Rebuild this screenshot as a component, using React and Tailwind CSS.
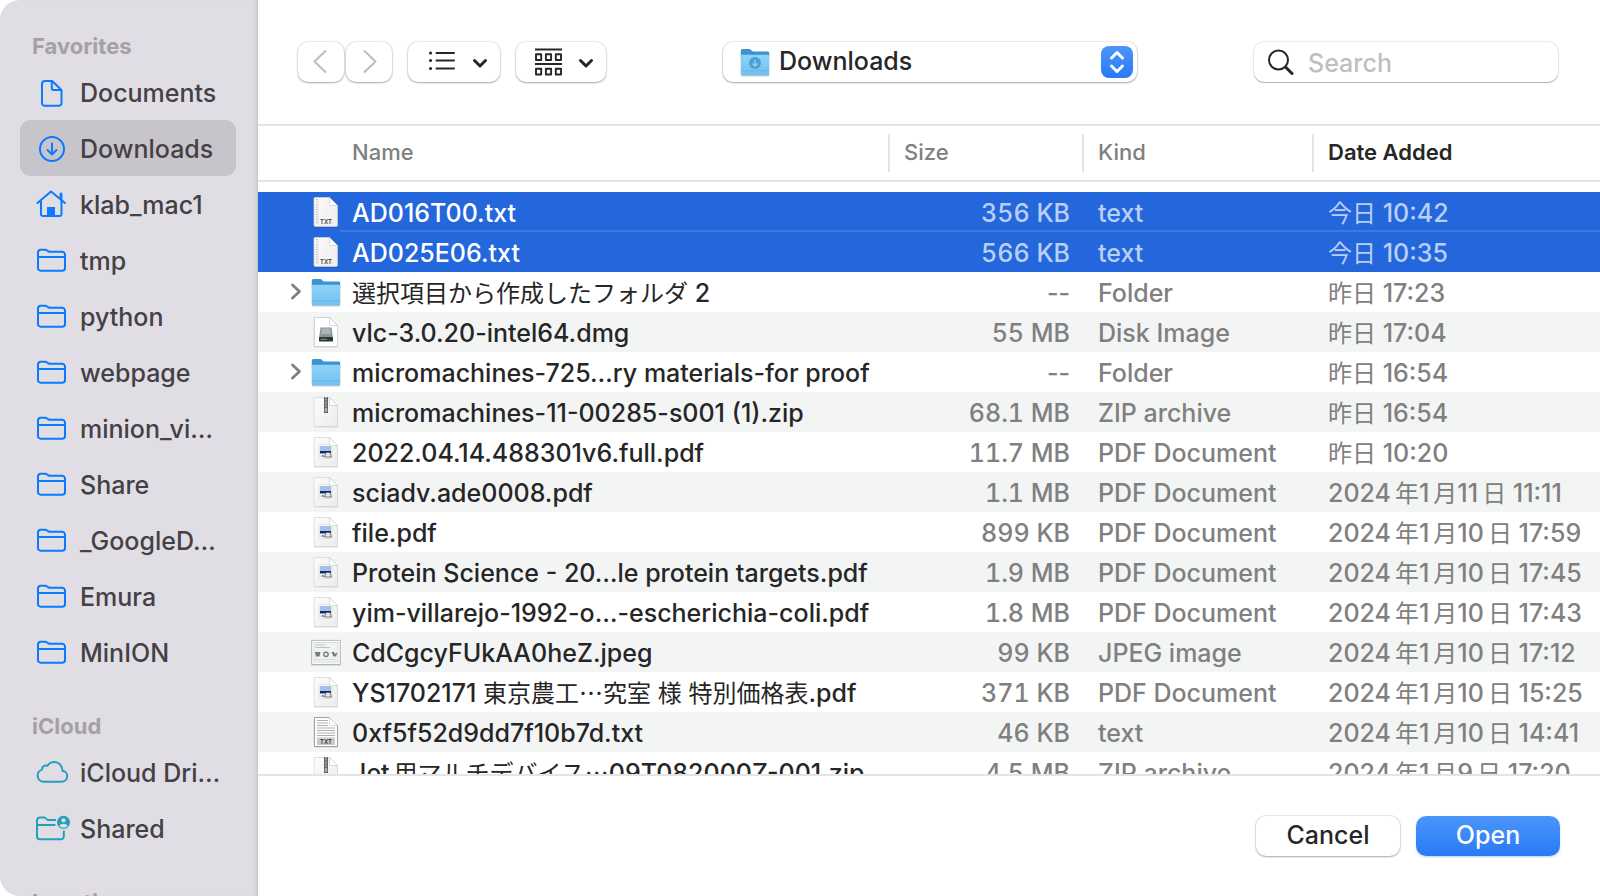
const CJK = /([\u2e80-\u9fff\uff00-\uffef\u22ef]+)/;

function Mixed({ text }) {
  const parts = text.split(CJK);
  return parts.map((part, i) => {
    if (i % 2 === 0) return part;
    const touchesLatin = /[0-9A-Za-z]$/.test(parts[i - 1]);
    return (
      <span key={i} className={`font-['Noto_Sans_CJK_JP',sans-serif] text-[24px] leading-none font-normal ${touchesLatin ? "ml-1" : ""}`}>
        {part}
      </span>
    );
  });
}

function FolderOutline() {
  return (
    <svg className="size-8" viewBox="0 0 32 32" fill="none" stroke="#0a7aff" strokeWidth="2" strokeLinejoin="round" aria-hidden="true">
      <path d="M2 24V8.500A2.800 2.800 0 0 1 4.800 5.800H9.500C11 5.800 11.800 7.800 13.500 7.800H26.200A2.800 2.800 0 0 1 29 10.600V24A2.700 2.700 0 0 1 26.300 26.700H4.700A2.700 2.700 0 0 1 2 24ZM2 13H29" />
    </svg>
  );
}

function DocumentOutline() {
  return (
    <svg className="size-8" viewBox="0 0 32 32" fill="none" stroke="#0a7aff" strokeWidth="2" strokeLinejoin="round" aria-hidden="true">
      <path d="M9 5H16.200L25.500 14V27A2.800 2.800 0 0 1 22.700 29.800H8.800A2.800 2.800 0 0 1 6 27V8A3 3 0 0 1 9 5Z" />
      <path d="M15.800 5V12.500A1.500 1.500 0 0 0 17.300 14H25.500" />
    </svg>
  );
}

function DownloadOutline() {
  return (
    <svg className="size-8" viewBox="0 0 32 32" fill="none" stroke="#0a7aff" strokeWidth="2" strokeLinecap="round" strokeLinejoin="round" aria-hidden="true">
      <circle cx="16" cy="17" r="12" />
      <path d="M16 11.500V22M11.500 18L16 22.500L20.500 18" />
    </svg>
  );
}

function HomeOutline() {
  return (
    <svg className="size-8" viewBox="0 0 32 32" fill="none" stroke="#0a7aff" strokeWidth="2" strokeLinecap="round" strokeLinejoin="round" aria-hidden="true">
      <path d="M1.500 15L15 3.500L29 15M5 13V26A1.800 1.800 0 0 0 6.800 28H23.700A1.800 1.800 0 0 0 25.500 26V13" />
      <path d="M25 11V6" strokeWidth="2.800" />
      <path d="M11 28V19H19V28Z" fill="#0a7aff" stroke="none" />
    </svg>
  );
}

function CloudOutline() {
  return (
    <svg className="h-8 w-9" viewBox="0 0 36 32" fill="none" stroke="#24a0bc" strokeWidth="2" strokeLinejoin="round" aria-hidden="true">
      <path d="M7.500 25.700A6.200 6.200 0 0 1 6 13.600C6 10.500 8.500 8.800 11.500 9.800C13 7.300 15.500 6 18.500 6C23 6 26.500 9.800 26.500 15C29.500 15 31.200 17.700 31.200 20C31.200 23.200 28.800 25.700 25.500 25.700Z" />
    </svg>
  );
}

function SharedOutline() {
  return (
    <svg className="h-8 w-9" viewBox="0 0 36 32" fill="none" stroke="#24a0bc" strokeWidth="2" strokeLinejoin="round" aria-hidden="true">
      <path d="M20 8H12C10.500 8 10 5.500 8.500 5.500H3.500A3 3 0 0 0 1 8V24.500A2.800 2.800 0 0 0 3.800 27.300H25A2.800 2.800 0 0 0 27.800 24.500V18.500M1 13H19.500" />
      <circle cx="27.500" cy="10.300" r="6.500" fill="#24a0bc" stroke="none" />
      <circle cx="27.500" cy="8.300" r="2.100" fill="#e1dde4" stroke="none" />
      <path d="M23.400 14.100C24.300 11.100 30.700 11.100 31.600 14.100C29.700 16.300 25.300 16.300 23.400 14.100Z" fill="#e1dde4" stroke="none" />
    </svg>
  );
}

function Page({ children }) {
  return (
    <svg className="h-9 w-7 shrink-0" viewBox="0 0 28 36" aria-hidden="true">
      <defs>
        <linearGradient id="paper" x1="0" y1="0" x2="1" y2="1">
          <stop offset="0" stopColor="#fcfcfc" />
          <stop offset="1" stopColor="#ececec" />
        </linearGradient>
      </defs>
      <path d="M2.500 4.500H17.500L26 12.500V32A1.500 1.500 0 0 1 24.500 33.500H3.500A1.500 1.500 0 0 1 2 32V5.500Z" fill="#00000022" />
      <path d="M2.500 3.500H17.500L25.500 11.500V31.200A1.300 1.300 0 0 1 24.200 32.500H3.200A1.300 1.300 0 0 1 2 31.200V4.500Z" fill="url(#paper)" stroke="#d4d4d4" strokeWidth="0.700" />
      {children}
      <path d="M17.500 3.500V10.500A1 1 0 0 0 18.500 11.500H25.500Z" fill="#fff" stroke="#c9c9c9" strokeWidth="0.700" />
    </svg>
  );
}

function TxtIcon() {
  return (
    <Page>
      <path d="M4.500 5V30" stroke="#a8a8a8" strokeWidth="1" strokeDasharray="1 1.500" />
      <path d="M6 5V30" stroke="#d2d2d2" strokeWidth="0.600" />
      <text x="14" y="29.500" textAnchor="middle" fontSize="6" fontWeight="600" fill="#444" className="font-['Inter',sans-serif]">TXT</text>
    </Page>
  );
}

function TxtPreviewIcon() {
  return (
    <Page>
      <path d="M2.500 3.500H17.500L25.500 11.500V32.500H2.500Z" fill="#fff" stroke="#8d8d8d" strokeWidth="0.800" />
      <path d="M5 6.500H16M5 9H16M5 11.500H16M5 14H23M5 16.500H23M5 19H23M5 21.500H23M5 24H23" stroke="#b0b0b0" strokeWidth="1.200" />
      <rect x="5" y="25" width="18" height="6" fill="#c9c9c9" />
      <text x="14" y="30" textAnchor="middle" fontSize="6" fontWeight="600" fill="#333" className="font-['Inter',sans-serif]">TXT</text>
    </Page>
  );
}

function PdfIcon() {
  return (
    <Page>
      <rect x="7.200" y="10.800" width="12" height="13.500" rx="1" fill="#fff" stroke="#ccc" strokeWidth="0.600" />
      <rect x="8" y="12" width="11" height="5.500" fill="#a0c0ee" />
      <rect x="8" y="17" width="11" height="2.500" fill="#16285c" />
      <path d="M8 20.500H19V23H8Z" fill="#dbe3ee" />
      <path d="M12.500 23L14 18.500H18L19.500 23Z" fill="#e4e8ec" stroke="#56616e" strokeWidth="0.800" />
      <path d="M10 23L11 21L12 23" fill="none" stroke="#56616e" strokeWidth="0.700" />
    </Page>
  );
}

function ZipIcon() {
  return (
    <Page>
      <rect x="12" y="3" width="4" height="16" fill="#5e646c" />
      <path d="M14 3V14" stroke="#c7ccd2" strokeWidth="1.600" strokeDasharray="1 1.200" />
      <rect x="12.800" y="14" width="2.400" height="4" rx="1" fill="#a9b0b8" />
    </Page>
  );
}

function DiskIcon() {
  return (
    <Page>
      <path d="M2.500 3.500H17.500L25.500 11.500V32.500H2.500Z" fill="#fff" stroke="#ccc" strokeWidth="0.800" />
      <path d="M8.500 13.500H19.500L21 24H7Z" fill="#8c9498" />
      <path d="M10 14.500H18L19 20H9Z" fill="#adb5b8" />
      <rect x="7" y="23" width="14" height="4.500" rx="0.800" fill="#2e3335" />
      <path d="M8.500 25.300H15" stroke="#79c08a" strokeWidth="0.800" />
    </Page>
  );
}

function JpegIcon() {
  return (
    <svg className="h-9 w-8 shrink-0" viewBox="0 0 32 36" aria-hidden="true">
      <rect x="1.500" y="7.500" width="29" height="24" fill="#00000035" />
      <rect x="1.800" y="6.300" width="28.400" height="24" fill="#fff" stroke="#a9a9a9" strokeWidth="0.800" />
      <rect x="4" y="8.500" width="24" height="19.500" fill="#f1f2f2" stroke="#c4c8c8" strokeWidth="0.600" />
      <path d="M5.500 11H15M5.500 13.500H20" stroke="#b6bfbd" strokeWidth="0.900" />
      <path d="M5 18H10.500L9.500 22.500H6ZM21.500 18H24L25 20L27.500 18L26 22.500H23.500Z" fill="#717d79" />
      <circle cx="16" cy="20.300" r="2.200" fill="none" stroke="#717d79" strokeWidth="1.400" />
      <path d="M5 25.500H26" stroke="#d5dad8" strokeWidth="0.900" />
    </svg>
  );
}

function FolderIcon({ download }) {
  return (
    <svg className="h-9 w-8 shrink-0" viewBox="0 0 32 36" aria-hidden="true">
      <defs>
        <linearGradient id="folder" x1="0" y1="0" x2="0" y2="1">
          <stop offset="0" stopColor="#8ed2f8" />
          <stop offset="1" stopColor="#74c0ee" />
        </linearGradient>
      </defs>
      <path d="M1.800 11V31A1.500 1.500 0 0 0 3.300 32.500H28.700A1.500 1.500 0 0 0 30.200 31V11Z" fill="#00000030" />
      <path d="M1.800 6.500A1.500 1.500 0 0 1 3.300 5H10.500C12 5 12.500 7.500 14.500 7.500H28.700A1.500 1.500 0 0 1 30.200 9V15H1.800Z" fill="#3f93cd" />
      <path d="M1.800 12.200A1.500 1.500 0 0 1 3.300 10.700H28.700A1.500 1.500 0 0 1 30.200 12.200V30A1.500 1.500 0 0 1 28.700 31.500H3.300A1.500 1.500 0 0 1 1.800 30Z" fill="url(#folder)" />
      <path d="M2 26.800H30" stroke="#5fb0e2" strokeWidth="0.800" />
      {download && (
        <>
          <circle cx="16" cy="19" r="6" fill="#4c9fd6" />
          <path d="M16 15.800V21.500M13.500 19.500L16 22L18.500 19.500" fill="none" stroke="#8ed2f8" strokeWidth="1.400" />
        </>
      )}
    </svg>
  );
}

const favorites = [
  ["Documents", DocumentOutline],
  ["Downloads", DownloadOutline],
  ["klab_mac1", HomeOutline],
  ["tmp", FolderOutline],
  ["python", FolderOutline],
  ["webpage", FolderOutline],
  ["minion_vi…", FolderOutline],
  ["Share", FolderOutline],
  ["_GoogleD…", FolderOutline],
  ["Emura", FolderOutline],
  ["MinION", FolderOutline],
];

const icloud = [
  ["iCloud Dri…", CloudOutline],
  ["Shared", SharedOutline],
];

const files = [
  ["AD016T00.txt", TxtIcon, "356 KB", "text", "今日 10:42"],
  ["AD025E06.txt", TxtIcon, "566 KB", "text", "今日 10:35"],
  ["選択項目から作成したフォルダ 2", FolderIcon, "--", "Folder", "昨日 17:23"],
  ["vlc-3.0.20-intel64.dmg", DiskIcon, "55 MB", "Disk Image", "昨日 17:04"],
  ["micromachines-725…ry materials-for proof", FolderIcon, "--", "Folder", "昨日 16:54"],
  ["micromachines-11-00285-s001 (1).zip", ZipIcon, "68.1 MB", "ZIP archive", "昨日 16:54"],
  ["2022.04.14.488301v6.full.pdf", PdfIcon, "11.7 MB", "PDF Document", "昨日 10:20"],
  ["sciadv.ade0008.pdf", PdfIcon, "1.1 MB", "PDF Document", "2024年1月11日 11:11"],
  ["file.pdf", PdfIcon, "899 KB", "PDF Document", "2024年1月10日 17:59"],
  ["Protein Science - 20…le protein targets.pdf", PdfIcon, "1.9 MB", "PDF Document", "2024年1月10日 17:45"],
  ["yim-villarejo-1992-o…-escherichia-coli.pdf", PdfIcon, "1.8 MB", "PDF Document", "2024年1月10日 17:43"],
  ["CdCgcyFUkAA0heZ.jpeg", JpegIcon, "99 KB", "JPEG image", "2024年1月10日 17:12"],
  ["YS1702171 東京農工⋯究室 様 特別価格表.pdf", PdfIcon, "371 KB", "PDF Document", "2024年1月10日 15:25"],
  ["0xf5f52d9dd7f10b7d.txt", TxtPreviewIcon, "46 KB", "text", "2024年1月10日 14:41"],
  ["Jet用マルチデバイス⋯09T082000Z-001.zip", ZipIcon, "4.5 MB", "ZIP archive", "2024年1月9日 17:20"],
];

function SidebarSection({ title, items, current }) {
  return (
    <section className="pt-7">
      <h2 className="flex h-9 items-center px-8 text-[22px] font-bold text-[#a3a0a6]">{title}</h2>
      <ul className="pr-[21px] pl-5">
        {items.map(([name, Icon]) => (
          <li key={name}>
            <a
              href="#"
              aria-current={name === current ? "page" : undefined}
              className="flex h-14 items-center rounded-[10px] pl-4 whitespace-nowrap aria-[current=page]:bg-[#c8c4cb]"
            >
              <span className="flex w-11 shrink-0">
                <Icon />
              </span>
              <span className="pt-[2px]">{name}</span>
            </a>
          </li>
        ))}
      </ul>
    </section>
  );
}

const raised = "rounded-[10px] bg-white shadow-[0_0_1px_1px_rgba(0,0,0,0.08),0_1px_2px_rgba(0,0,0,0.28)]";

function Toolbar() {
  return (
    <header className="flex h-[126px] shrink-0 items-center justify-between gap-6 border-b-2 border-[#e4e4e4] pr-[42px] pl-10">
      <div className="flex gap-4">
        <div className="flex gap-[2px]">
          <button aria-label="Back" className={`flex h-10 w-[46px] items-center justify-center pr-[2px] ${raised}`}>
            <svg className="h-6 w-4" viewBox="0 0 16 24" fill="none" stroke="#bdbdbd" strokeWidth="2" strokeLinecap="round" strokeLinejoin="round">
              <path d="M13.500 1L2.500 11.500L13.500 22" />
            </svg>
          </button>
          <button aria-label="Forward" className={`flex h-10 w-[46px] items-center justify-center pl-[2px] ${raised}`}>
            <svg className="h-6 w-4" viewBox="0 0 16 24" fill="none" stroke="#bdbdbd" strokeWidth="2" strokeLinecap="round" strokeLinejoin="round">
              <path d="M2.500 1L13.500 11.500L2.500 22" />
            </svg>
          </button>
        </div>
        <button aria-label="View as list" className={`flex h-10 w-[92px] items-center justify-between pr-3 pl-5 ${raised}`}>
          <svg className="h-7 w-7" viewBox="0 0 28 28" fill="none" stroke="#262626" strokeWidth="2" strokeLinecap="round">
            <path d="M8.500 5H26M8.500 12.500H26M8.500 20.500H26" />
            <path d="M2.500 5H2.600M2.500 12.500H2.600M2.500 20.500H2.600" strokeWidth="3" />
          </svg>
          <DownChevron />
        </button>
        <button aria-label="Group by" className={`flex h-10 w-[90px] items-center justify-between pr-3 pl-[18px] ${raised}`}>
          <svg className="h-7 w-7" viewBox="0 0 28 28" fill="none" stroke="#262626" strokeWidth="1.900">
            <path d="M1 1.500H28M1 16H28" />
            <path d="M2 6.200H7.200V12H2ZM11.900 6.200H17.100V12H11.900ZM21.800 6.200H27V12H21.800ZM2 20.700H7.200V26.500H2ZM11.900 20.700H17.100V26.500H11.900ZM21.800 20.700H27V26.500H21.800Z" strokeLinejoin="round" />
          </svg>
          <DownChevron />
        </button>
      </div>

      <div className={`relative flex h-10 w-[414px] items-center ${raised}`}>
        <span className="pointer-events-none absolute left-4">
          <FolderIcon download />
        </span>
        <select aria-label="Location" className="h-full w-full appearance-none rounded-[10px] bg-transparent pb-[2px] pl-14 text-[#262626]">
          <option>Downloads</option>
        </select>
        <svg className="pointer-events-none absolute right-1 size-8" viewBox="0 0 32 32" fill="none" aria-hidden="true">
          <defs>
            <linearGradient id="stepper" x1="0" y1="0" x2="0" y2="1">
              <stop offset="0" stopColor="#4a96fa" />
              <stop offset="1" stopColor="#2a79f7" />
            </linearGradient>
          </defs>
          <rect width="32" height="32" rx="8" fill="url(#stepper)" />
          <path d="M10.500 12L16 6.500L21.500 12M10.500 20L16 25.500L21.500 20" stroke="#fff" strokeWidth="3" strokeLinecap="round" strokeLinejoin="round" />
        </svg>
      </div>

      <div className="relative flex h-10 w-[304px] items-center rounded-[10px] bg-white shadow-[0_0_1px_1px_rgba(0,0,0,0.08),0_1px_1px_rgba(0,0,0,0.25)]">
        <svg className="pointer-events-none absolute left-3 size-7" viewBox="0 0 28 28" fill="none" stroke="#262626" strokeLinecap="round" aria-hidden="true">
          <circle cx="12.500" cy="12" r="9.500" strokeWidth="2" />
          <path d="M19.500 19L26 25.500" strokeWidth="3" />
        </svg>
        <input type="search" aria-label="Search" placeholder="Search" className="h-full w-full rounded-[10px] bg-transparent pt-[2px] pl-[54px] text-[#262626] outline-none placeholder:text-[#bfbfbf]" />
      </div>
    </header>
  );
}

function DownChevron() {
  return (
    <svg className="size-4" viewBox="0 0 16 16" fill="none" stroke="#262626" strokeWidth="3" strokeLinecap="round" strokeLinejoin="round" aria-hidden="true">
      <path d="M2.500 6.500L8 12L13.500 6.500" />
    </svg>
  );
}

function FileRow({ file, index }) {
  const [name, Icon, size, kind, date] = file;
  const selected = index < 2;
  const tone = selected ? "bg-[#2466db] text-[#b9cff6]" : index % 2 ? "bg-[#f3f5f5] text-[#808080]" : "bg-white text-[#808080]";
  const line = index === 0 ? "border-b-2 border-[#3d79e0] pt-1" : "pt-[2px]";
  return (
    <tr className={`h-10 ${tone}`} aria-selected={selected}>
      <td className={`p-0 ${selected ? "font-medium text-white" : "text-[#262626]"}`}>
        <div className="flex h-10 items-center pl-[30px]">
          <span className="flex w-6 shrink-0">
            {Icon === FolderIcon && (
              <button aria-label="Expand" className="flex">
                <svg className="size-5" viewBox="0 0 20 20" fill="none" stroke="#7f7f7f" strokeWidth="2.800" strokeLinecap="round" strokeLinejoin="round">
                  <path d="M4.500 3L11.500 9.500L4.500 16" />
                </svg>
              </button>
            )}
          </span>
          <span className="flex w-7 shrink-0 justify-center">
            <Icon />
          </span>
          <span className={`flex h-10 min-w-0 flex-1 items-center pl-3 ${line}`}>
            <span className="whitespace-pre">
              <Mixed text={name} />
            </span>
          </span>
        </div>
      </td>
      <td className="p-0">
        <div className={`flex h-10 items-center justify-end pr-3 ${size === "--" ? "" : "tabular-nums"} ${line}`}>{size}</div>
      </td>
      <td className="p-0">
        <div className={`flex h-10 items-center pl-4 ${line}`}>{kind}</div>
      </td>
      <td className="p-0">
        <div className={`flex h-10 items-center pl-4 ${line}`}>
          <span className="whitespace-pre">
            <Mixed text={date} />
          </span>
        </div>
      </td>
    </tr>
  );
}

function HeadCell({ children, first, strong }) {
  return (
    <th className={`p-0 pb-[10px] text-left text-[22px] ${strong ? "font-semibold text-[#262626]" : "font-[450] text-[#808080]"}`}>
      <div className="flex h-14 items-center border-b-2 border-[#e4e4e4]">
        <span className={`flex h-[38px] items-center pb-[2px] ${first ? "pl-[94px]" : "border-l-2 border-[#e4e4e4] pl-[14px]"}`}>{children}</span>
      </div>
    </th>
  );
}

export default function App() {
  return (
    <div className="flex h-screen overflow-hidden bg-white font-['Inter','Noto_Sans_CJK_JP',sans-serif] text-[25px] leading-8 font-[450]">
      <nav aria-label="Sidebar" className="w-[258px] shrink-0 overflow-hidden rounded-l-[20px] border-r border-[#c9c5cc] bg-[#e1dde4] text-[#434145] shadow-[inset_-4px_0_4px_-3px_rgba(0,0,0,0.10)]">
        <SidebarSection title="Favorites" items={favorites} current="Downloads" />
        <SidebarSection title="iCloud" items={icloud} />
        <SidebarSection title="Locations" items={[]} />
      </nav>

      <main className="flex min-w-0 flex-1 flex-col">
        <Toolbar />
        <div className="min-h-0 flex-1 overflow-hidden">
          <table className="w-full table-fixed border-collapse">
            <colgroup>
              <col />
              <col className="w-[194px]" />
              <col className="w-[230px]" />
              <col className="w-[288px]" />
            </colgroup>
            <thead>
              <tr>
                <HeadCell first>Name</HeadCell>
                <HeadCell>Size</HeadCell>
                <HeadCell>Kind</HeadCell>
                <HeadCell strong>Date Added</HeadCell>
              </tr>
            </thead>
            <tbody>
              {files.map((file, i) => (
                <FileRow key={file[0]} file={file} index={i} />
              ))}
            </tbody>
          </table>
        </div>
        <footer className="flex h-[122px] shrink-0 items-start justify-end gap-4 border-t-2 border-[#e4e4e4] pt-10 pr-10">
          <button className={`h-10 w-36 pb-[2px] text-[#262626] ${raised}`}>Cancel</button>
          <button className="h-10 w-36 rounded-[10px] bg-linear-to-b from-[#4a96fa] to-[#2a79f7] pb-[2px] text-white shadow-[0_1px_2px_rgba(42,121,247,0.35)]">Open</button>
        </footer>
      </main>
    </div>
  );
}
